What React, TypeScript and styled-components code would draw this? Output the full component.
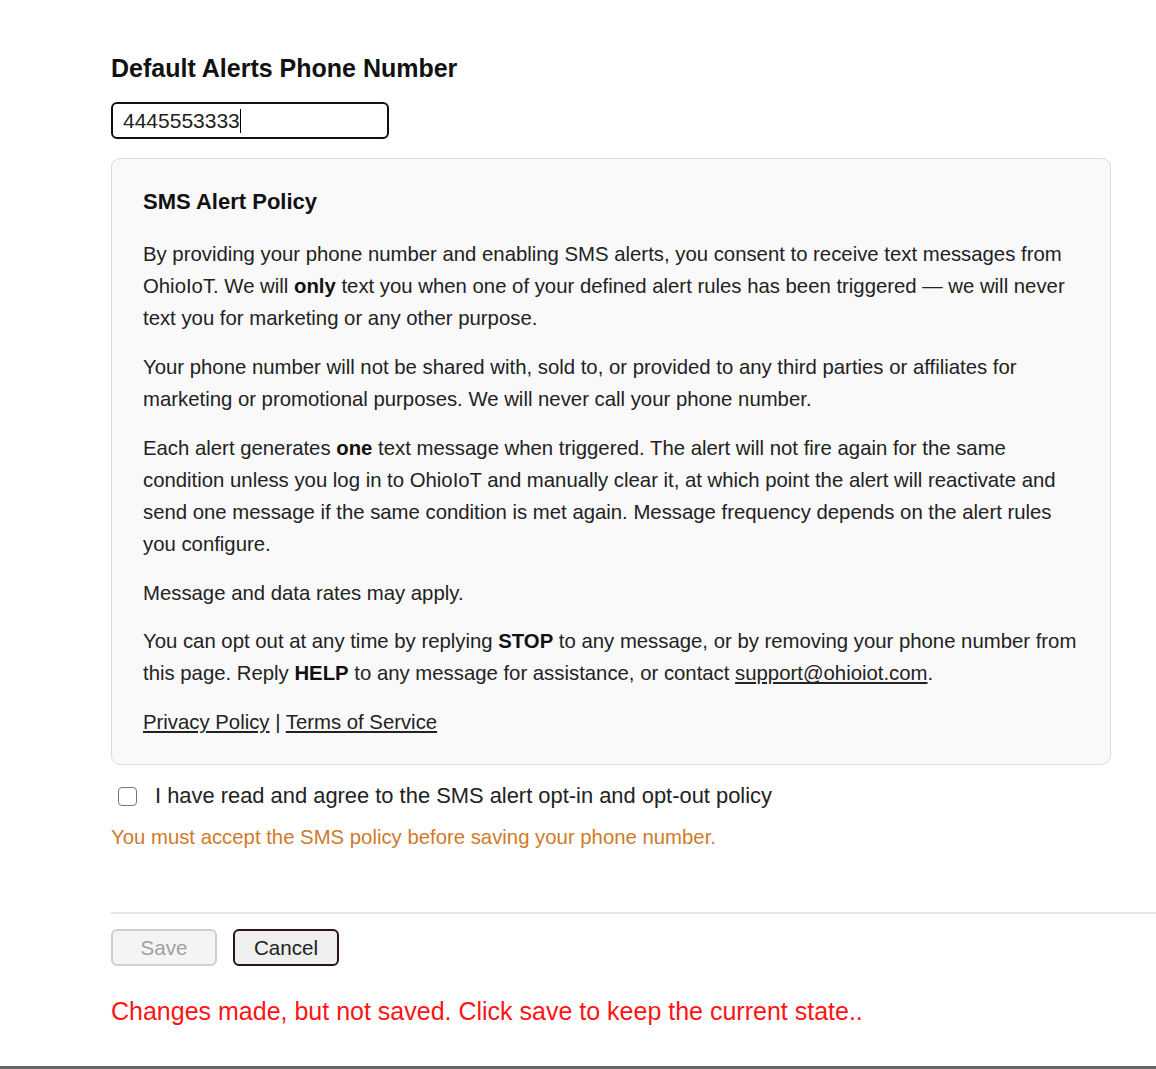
import React from 'react';
import styled, { createGlobalStyle } from 'styled-components';

const GlobalStyle = createGlobalStyle`
  html, body {
    margin: 0;
    padding: 0;
    background: #ffffff;
    font-family: "Liberation Sans", Arial, sans-serif;
    color: #222;
  }
`;

const App: React.FC = () => {
  return (
    <>
      <GlobalStyle />
      <Page>
        <Content>
          <Section>
            <Heading>Default Alerts Phone Number</Heading>
            <PhoneField role="textbox" aria-label="Default Alerts Phone Number">
              4445553333<Caret />
            </PhoneField>

            <PolicyBox>
              <PolicyTitle>SMS Alert Policy</PolicyTitle>
              <PolicyText>
                By providing your phone number and enabling SMS alerts, you consent to receive text
                messages from OhioIoT. We will <strong>only</strong> text you when one of your defined
                alert rules has been triggered — we will never text you for marketing or any other
                purpose.
              </PolicyText>
              <PolicyText>
                Your phone number will not be shared with, sold to, or provided to any third parties or
                affiliates for marketing or promotional purposes. We will never call your phone number.
              </PolicyText>
              <PolicyText>
                Each alert generates <strong>one</strong> text message when triggered. The alert will
                not fire again for the same condition unless you log in to OhioIoT and manually clear
                it, at which point the alert will reactivate and send one message if the same condition
                is met again. Message frequency depends on the alert rules you configure.
              </PolicyText>
              <PolicyText>Message and data rates may apply.</PolicyText>
              <PolicyText>
                You can opt out at any time by replying <strong>STOP</strong> to any message, or by
                removing your phone number from this page. Reply <strong>HELP</strong> to any message for
                assistance, or contact <PolicyLink href="#">support@ohioiot.com</PolicyLink>.
              </PolicyText>
              <PolicyText>
                <PolicyLink href="#">Privacy Policy</PolicyLink> | <PolicyLink href="#">Terms of Service</PolicyLink>
              </PolicyText>
            </PolicyBox>

            <AgreeRow>
              <Checkbox type="checkbox" />
              <span>I have read and agree to the SMS alert opt-in and opt-out policy</span>
            </AgreeRow>
            <Warning>You must accept the SMS policy before saving your phone number.</Warning>
          </Section>

          <Divider />

          <Actions>
            <ActionButton disabled>Save</ActionButton>
            <ActionButton>Cancel</ActionButton>
          </Actions>

          <UnsavedNote>Changes made, but not saved. Click save to keep the current state..</UnsavedNote>
        </Content>
        <BottomBar />
      </Page>
    </>
  );
};

const Page = styled.div`
  min-height: 100vh;
  display: flex;
  flex-direction: column;
`;

const Content = styled.div`
  padding: 54px 0 0 111px;
`;

const Section = styled.div`
  max-width: 1000px;
`;

const Heading = styled.h3`
  margin: 0 0 19px;
  font-size: 25px;
  line-height: 29px;
  font-weight: 700;
  color: #111;
`;

const PhoneField = styled.div`
  box-sizing: border-box;
  width: 278px;
  height: 37px;
  padding: 0 10px;
  display: flex;
  align-items: center;
  border: 2px solid #111;
  border-radius: 6px;
  font-size: 21px;
  color: #222;
`;

const Caret = styled.span`
  display: inline-block;
  width: 1.5px;
  height: 24px;
  background: #000;
`;

const PolicyBox = styled.div`
  margin-top: 19px;
  padding: 30px 31px 10px;
  background: #f9f9f9;
  border: 1px solid #dcdcdc;
  border-radius: 9px;
`;

const PolicyTitle = styled.h4`
  margin: 0 0 23px;
  font-size: 22px;
  line-height: 26px;
  font-weight: 700;
  color: #111;
`;

const PolicyText = styled.p`
  margin: 0 0 16.3px;
  font-size: 20.33px;
  line-height: 32.2px;
  color: #222;

  strong {
    color: #111;
  }
`;

const PolicyLink = styled.a`
  color: #222;
  text-decoration: underline;
  text-underline-offset: 2px;
`;

const AgreeRow = styled.label`
  display: flex;
  align-items: center;
  gap: 18px;
  margin-top: 19px;
  padding-left: 7px;
  font-size: 21.9px;
  line-height: 24px;
  color: #222;
`;

const Checkbox = styled.input`
  appearance: none;
  margin: 0;
  width: 19px;
  height: 19px;
  border: 1.5px solid #767676;
  border-radius: 4px;
  background: #fff;
`;

const Warning = styled.div`
  margin-top: 17px;
  font-size: 20.33px;
  line-height: 24px;
  color: #cf7a2a;
`;

const Divider = styled.hr`
  margin: 63px 0 0;
  border: 0;
  border-top: 2px solid #e6e6e6;
`;

const Actions = styled.div`
  display: flex;
  gap: 16px;
  margin-top: 15px;
`;

const ActionButton = styled.button`
  box-sizing: border-box;
  width: 106px;
  height: 37px;
  font-family: "Liberation Sans", Arial, sans-serif;
  font-size: 20.6px;
  border-radius: 6px;
  background: #efefef;
  border: 2px solid #2a1515;
  color: #222;

  &:disabled {
    background: #f4f4f4;
    border-color: #cfcfcf;
    color: #a0a0a0;
  }
`;

const UnsavedNote = styled.div`
  margin-top: 31px;
  font-size: 25px;
  line-height: 28px;
  color: #ff1414;
`;

const BottomBar = styled.div`
  margin-top: auto;
  height: 3px;
  background: #666;
`;

export default App;
